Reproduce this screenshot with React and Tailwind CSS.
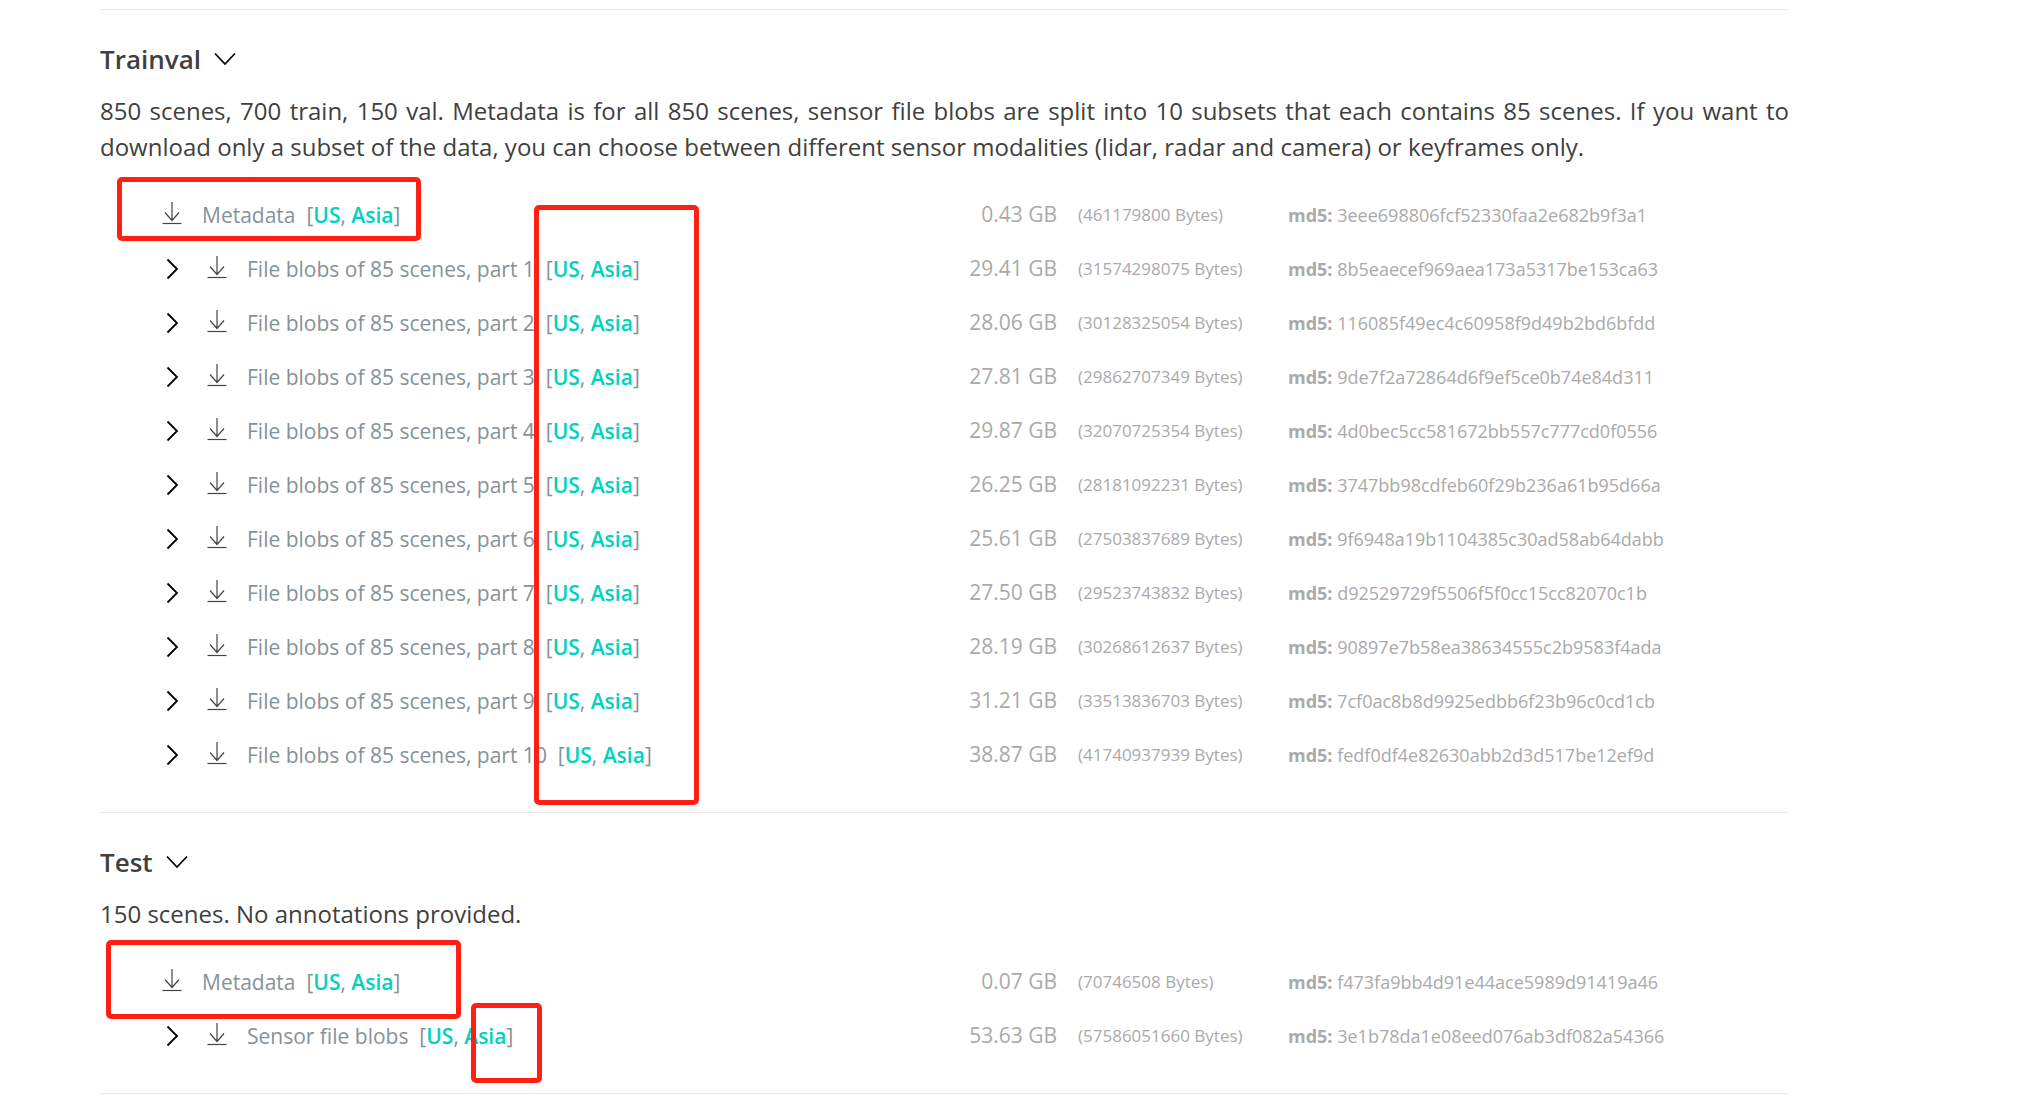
const trainvalFiles = [
  { name: "Metadata", size: "0.43 GB", bytes: "461179800", md5: "3eee698806fcf52330faa2e682b9f3a1" },
  { name: "File blobs of 85 scenes, part 1", size: "29.41 GB", bytes: "31574298075", md5: "8b5eaecef969aea173a5317be153ca63", nested: true },
  { name: "File blobs of 85 scenes, part 2", size: "28.06 GB", bytes: "30128325054", md5: "116085f49ec4c60958f9d49b2bd6bfdd", nested: true },
  { name: "File blobs of 85 scenes, part 3", size: "27.81 GB", bytes: "29862707349", md5: "9de7f2a72864d6f9ef5ce0b74e84d311", nested: true },
  { name: "File blobs of 85 scenes, part 4", size: "29.87 GB", bytes: "32070725354", md5: "4d0bec5cc581672bb557c777cd0f0556", nested: true },
  { name: "File blobs of 85 scenes, part 5", size: "26.25 GB", bytes: "28181092231", md5: "3747bb98cdfeb60f29b236a61b95d66a", nested: true },
  { name: "File blobs of 85 scenes, part 6", size: "25.61 GB", bytes: "27503837689", md5: "9f6948a19b1104385c30ad58ab64dabb", nested: true },
  { name: "File blobs of 85 scenes, part 7", size: "27.50 GB", bytes: "29523743832", md5: "d92529729f5506f5f0cc15cc82070c1b", nested: true },
  { name: "File blobs of 85 scenes, part 8", size: "28.19 GB", bytes: "30268612637", md5: "90897e7b58ea38634555c2b9583f4ada", nested: true },
  { name: "File blobs of 85 scenes, part 9", size: "31.21 GB", bytes: "33513836703", md5: "7cf0ac8b8d9925edbb6f23b96c0cd1cb", nested: true },
  { name: "File blobs of 85 scenes, part 10", size: "38.87 GB", bytes: "41740937939", md5: "fedf0df4e82630abb2d3d517be12ef9d", nested: true },
];

const testFiles = [
  { name: "Metadata", size: "0.07 GB", bytes: "70746508", md5: "f473fa9bb4d91e44ace5989d91419a46" },
  { name: "Sensor file blobs", size: "53.63 GB", bytes: "57586051660", md5: "3e1b78da1e08eed076ab3df082a54366", nested: true },
];

function ChevronDown() {
  return (
    <svg width="24" height="24" viewBox="0 0 24 24" fill="none" stroke="#000" strokeWidth="1.7" aria-hidden="true">
      <path d="M2 6.5 12 17 22 6.5" />
    </svg>
  );
}

function ChevronRight() {
  return (
    <svg width="20" height="24" viewBox="0 0 20 24" fill="none" stroke="#000" strokeWidth="1.8" aria-hidden="true">
      <path d="M5.5 2.5 15 12 5.5 21.5" />
    </svg>
  );
}

function DownloadIcon() {
  return (
    <svg className="shrink-0" width="20" height="26" viewBox="0 0 20 26" fill="none" stroke="#444" aria-hidden="true">
      <path d="M10 0V18.5M3 10.500 10 18.500 17 10.500" strokeWidth="1.2" />
      <path d="M.5 21.5H19.5" strokeWidth="1.2" />
    </svg>
  );
}

function RegionLink({ children }) {
  return (
    <a href="#download" className="font-semibold text-[#00d2be]">
      {children}
    </a>
  );
}

function FileRow({ file }) {
  return (
    <tr className="h-[54px]">
      <td className="p-0">
        <div className="flex items-center gap-5 pl-[62px]">
          {file.nested && (
            <button type="button" aria-label={`Expand ${file.name}`} className="w-[25px]">
              <ChevronRight />
            </button>
          )}
          <DownloadIcon />
          <span className="text-[21px] leading-8 whitespace-pre text-[#869298]">
            {file.name}
            {"  "}[<RegionLink>US</RegionLink>, <RegionLink>Asia</RegionLink>]
          </span>
        </div>
      </td>
      <td className="p-0 pr-[21px] text-right text-[21px]">{file.size}</td>
      <td className="p-0 text-[17px]">({file.bytes} Bytes)</td>
      <td className="p-0 text-[18px]">
        <b>md5:</b> {file.md5}
      </td>
    </tr>
  );
}

function Mark({ className }) {
  return <div aria-hidden="true" className={`pointer-events-none absolute rounded-[5px] border-[5px] border-[#ff2013] ${className}`} />;
}

function Section({ title, description, files, children }) {
  return (
    <section className="relative border-b border-[#ebebeb] pt-[31px] pb-[30px] text-[#404040]">
      <h2 className="text-[26px] font-semibold">
        <button type="button" className="flex h-9 items-center gap-3">
          {title}
          <ChevronDown />
        </button>
      </h2>
      <p className="mt-4 text-justify text-2xl leading-9">{description}</p>
      <table className="mt-[23px] w-full table-fixed border-collapse whitespace-nowrap text-[#aaaaaa]">
        <colgroup>
          <col />
          <col className="w-[130px]" />
          <col className="w-[210px]" />
          <col className="w-[501px]" />
        </colgroup>
        <tbody>
          {files.map((file) => (
            <FileRow key={file.md5} file={file} />
          ))}
        </tbody>
      </table>
      {children}
    </section>
  );
}

export default function App() {
  return (
    <main className="mt-[9px] mr-[242px] ml-[100px] border-t border-[#ebebeb] bg-white font-['Open_Sans',sans-serif]">
      <Section
        title="Trainval"
        description="850 scenes, 700 train, 150 val. Metadata is for all 850 scenes, sensor file blobs are split into 10 subsets that each contains 85 scenes. If you want to download only a subset of the data, you can choose between different sensor modalities (lidar, radar and camera) or keyframes only."
        files={trainvalFiles}
      >
        <Mark className="top-[167px] left-[17px] h-[64px] w-[304px]" />
        <Mark className="top-[195px] left-[434px] h-[600px] w-[165px]" />
      </Section>
      <Section title="Test" description="150 scenes. No annotations provided." files={testFiles}>
        <Mark className="top-[127px] left-[6px] h-[79px] w-[355px]" />
        <Mark className="top-[190px] left-[371px] h-[80px] w-[71px]" />
      </Section>
    </main>
  );
}
